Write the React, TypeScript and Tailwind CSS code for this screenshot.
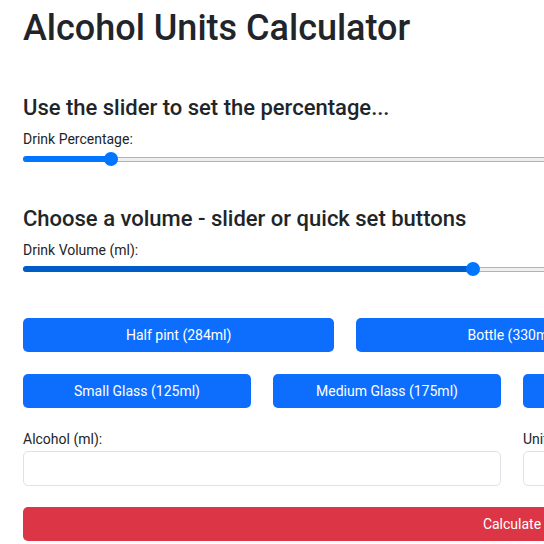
import React from 'react';

interface SliderProps {
  percent: number;
  fillClass: string;
}

// fake range input: filled track, grey remainder, round thumb
const Slider = ({ percent, fillClass }: SliderProps) => {
  return (
    <div className="relative h-[16px] w-full flex items-center">
      <div className="h-[5px] w-full rounded-full bg-[#efefef] border border-[#b2b2b2]" />
      <div
        className={`absolute left-0 h-[6px] rounded-full ${fillClass}`}
        style={{ width: `${percent}%` }}
      />
      <div
        className="absolute h-[14px] w-[14px] -ml-[7px] rounded-full bg-[#0075ff]"
        style={{ left: `${percent}%` }}
      />
    </div>
  );
};

const QuickButton = ({ label }: { label: string }) => (
  <button className="h-[34px] rounded-[5px] bg-[#0d6efd] text-white text-[14px] leading-[20px]">
    {label}
  </button>
);

export default function App() {
  return (
    <div
      className="w-[1024px] px-[23px] bg-white text-[#212529]"
      style={{ fontFamily: 'Roboto, "Noto Sans", sans-serif' }}
    >
      <h1 className="pt-[7px] text-[36px] leading-[43px] font-medium">Alcohol Units Calculator</h1>

      <h2 className="mt-[45px] text-[22px] leading-[26px] font-medium">
        Use the slider to set the percentage...
      </h2>
      <div className="mt-[8px] text-[14px] leading-[20px]">Drink Percentage:</div>
      <div className="mt-[2px]">
        <Slider percent={9} fillClass="bg-[#0075ff]" />
      </div>

      <h2 className="mt-[39px] text-[22px] leading-[26px] font-medium">
        Choose a volume - slider or quick set buttons
      </h2>
      <div className="mt-[8px] text-[14px] leading-[20px]">Drink Volume (ml):</div>
      <div className="mt-[1px]">
        <Slider percent={46} fillClass="bg-[#005cc8]" />
      </div>

      <div className="mt-[41px] grid grid-cols-3 gap-[22px]">
        <QuickButton label="Half pint (284ml)" />
        <QuickButton label="Bottle (330ml)" />
        <QuickButton label="Pint (568ml)" />
      </div>
      <div className="mt-[22px] grid grid-cols-4 gap-[22px]">
        <QuickButton label="Small Glass (125ml)" />
        <QuickButton label="Medium Glass (175ml)" />
        <QuickButton label="Large Glass (250ml)" />
        <QuickButton label="Bottle of Wine (750ml)" />
      </div>

      <div className="mt-[21px] grid grid-cols-2 gap-[22px]">
        <div className="flex flex-col">
          <label className="text-[14px] leading-[20px] mb-[2px]">Alcohol (ml):</label>
          <input className="h-[35px] rounded-[5px] border border-[#dee2e6] px-3" />
        </div>
        <div className="flex flex-col">
          <label className="text-[14px] leading-[20px] mb-[2px]">Units:</label>
          <input className="h-[35px] rounded-[5px] border border-[#dee2e6] px-3" />
        </div>
      </div>

      <button className="mt-[21px] mb-[20px] w-full h-[34px] rounded-[5px] bg-[#dc3545] text-white text-[14px] leading-[20px]">
        Calculate
      </button>
    </div>
  );
}
